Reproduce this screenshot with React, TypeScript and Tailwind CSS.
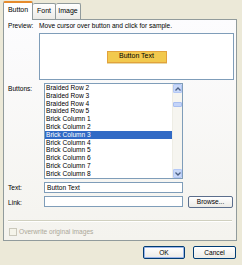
import React from "react";

const items = [
	"Braided Row 2",
	"Braided Row 3",
	"Braided Row 4",
	"Braided Row 5",
	"Brick Column 1",
	"Brick Column 2",
	"Brick Column 3",
	"Brick Column 4",
	"Brick Column 5",
	"Brick Column 6",
	"Brick Column 7",
	"Brick Column 8",
];

const ArrowUp = () => (
	<svg width="6" height="4" viewBox="0 0 6 4">
		<path d="M0.5 3.5 L3 1 L5.5 3.5" stroke="#4D6185" strokeWidth="1.3" fill="none" />
	</svg>
);

const ArrowDown = () => (
	<svg width="6" height="4" viewBox="0 0 6 4">
		<path d="M0.5 0.5 L3 3 L5.5 0.5" stroke="#4D6185" strokeWidth="1.3" fill="none" />
	</svg>
);

const App: React.FC = () => {
	const selected = 6;

	return (
		<div
			className="w-[242px] h-[265px] bg-[#ECE9D8] pt-px px-[3px] text-[6.6px] text-black overflow-hidden"
			style={{ fontFamily: '"Liberation Sans", Arial, sans-serif' }}
		>
			{/* tabs */}
			<div className="flex items-end h-[18px] relative z-10">
				<div className="h-[19px] -mb-px w-[30px] bg-white border-x border-[#919B9C] border-t-[2px] border-t-[#E68B2C] rounded-t-[2px] flex items-center justify-center pb-[2px] text-[7px]">
					Button
				</div>
				<div className="h-[16px] w-[23px] bg-gradient-to-b from-white to-[#ECEBE6] border-t border-r border-[#919B9C] rounded-t-[2px] flex items-center justify-center text-[7px]">
					Font
				</div>
				<div className="h-[16px] w-[25px] bg-gradient-to-b from-white to-[#ECEBE6] border-t border-r border-[#919B9C] rounded-t-[2px] flex items-center justify-center text-[7px]">
					Image
				</div>
			</div>

			{/* panel */}
			<div className="w-[234px] h-[222px] border border-[#919B9C] bg-gradient-to-b from-[#FCFCFE] to-[#F4F3EE] pl-[4px] pr-[2px] pt-[2px] flex flex-col">
				<div className="flex h-[8px] items-center">
					<span className="w-[31px]">Preview:</span>
					<span>Move cursor over button and click for sample.</span>
				</div>
				<div className="ml-[31px] mt-[3px] h-[47px] border border-[#7F9DB9] bg-white flex items-center justify-center">
					<div className="w-[60px] h-[12px] bg-[#F2C94D] border border-[#E2A23C] shadow-[0_1px_0_#E8D9A8] flex items-center justify-center text-[7px]">
						Button Text
					</div>
				</div>

				<div className="flex mt-[3px]">
					<span className="w-[36px] pt-[1px]">Buttons:</span>
					<div className="w-[139px] h-[96px] border border-[#7F9DB9] bg-white flex">
						<div className="flex-1 overflow-hidden">
							{items.map((it, i) => (
								<div
									key={it}
									className={`h-[7.8px] leading-[7.8px] pl-[1px] whitespace-nowrap ${
										i === selected ? "bg-[#316AC5] text-white" : ""
									}`}
								>
									{it}
								</div>
							))}
						</div>
						<div className="w-[10px] bg-[#F6F5F0] border-l border-[#EEEDE5] flex flex-col">
							<div className="h-[9px] bg-[#C8D8F8] border border-[#B4C8F6] rounded-[1px] flex items-center justify-center">
								<ArrowUp />
							</div>
							<div className="mt-[9px] h-[5px] bg-[#C4D4F8] border border-[#A8BEF0] rounded-[1px]" />
							<div className="flex-1" />
							<div className="h-[9px] bg-[#C8D8F8] border border-[#B4C8F6] rounded-[1px] flex items-center justify-center">
								<ArrowDown />
							</div>
						</div>
					</div>
				</div>

				<div className="flex items-center mt-[3px]">
					<span className="w-[36px]">Text:</span>
					<div className="w-[139px] h-[11px] border border-[#7F9DB9] bg-white flex items-center pl-[2px]">
						Button Text
					</div>
				</div>

				<div className="flex mt-[3px]">
					<span className="w-[36px] pt-[2px]">Link:</span>
					<div className="w-[139px] h-[11px] border border-[#7F9DB9] bg-white" />
					<div className="ml-[5px] w-[45px] h-[12px] border border-[#5B6E8C] rounded-[2px] bg-gradient-to-b from-white to-[#ECEBE6] flex items-center justify-center">
						Browse...
					</div>
				</div>

				<div className="mt-[12px] mr-[2px] h-px bg-[#D0D0BF] border-b border-white box-content" />

				<div className="flex items-center mt-[5px] ml-px text-[#ACA899]">
					<div className="w-[8px] h-[8px] border border-[#CAC8BB] bg-[#F5F4EA] mr-[2px]" />
					<span>Overwrite original images</span>
				</div>
			</div>

			{/* dialog buttons */}
			<div className="flex justify-end gap-[8px] mt-[5px] pr-[3px]">
				<div className="w-[42px] h-[13px] border border-[#003C74] rounded-[2px] bg-gradient-to-b from-white to-[#ECEBE6] shadow-[inset_0_0_0_1px_#9DB6E8] flex items-center justify-center">
					OK
				</div>
				<div className="w-[43px] h-[13px] border border-[#003C74] rounded-[2px] bg-gradient-to-b from-white to-[#ECEBE6] flex items-center justify-center">
					Cancel
				</div>
			</div>
		</div>
	);
};

export default App;
